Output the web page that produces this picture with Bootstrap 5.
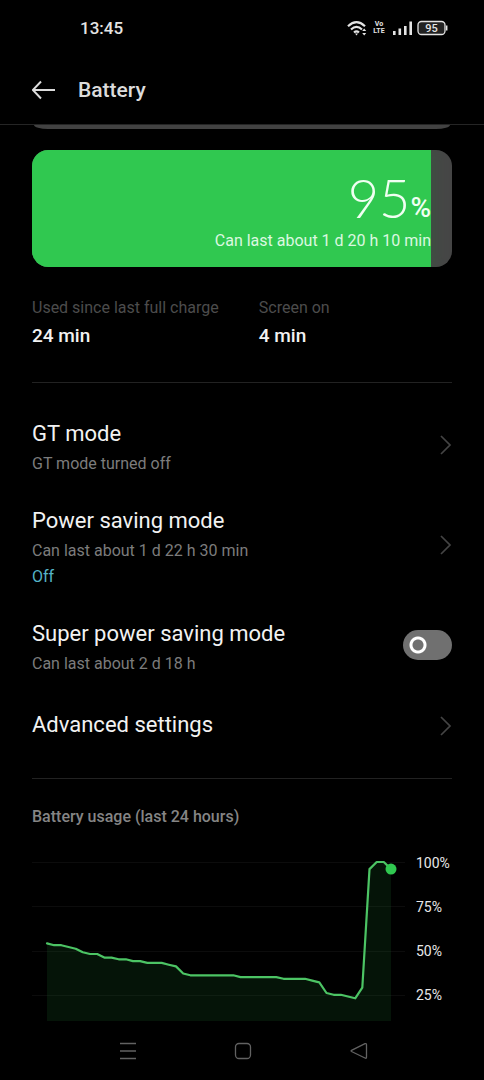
<!DOCTYPE html>
<html lang="en">
<head>
<meta charset="utf-8">
<meta name="viewport" content="width=device-width, initial-scale=1">
<title>Battery</title>
<link href="https://cdn.jsdelivr.net/npm/bootstrap@5.3.0/dist/css/bootstrap.min.css" rel="stylesheet">
<style>
  body { background: #000; color: #f2f2f2; font-family: Roboto, "Noto Sans", sans-serif; font-size: 16px; line-height: 24px; }
  .gutter { padding-left: 32px; padding-right: 32px; }
  .status { height: 56px; padding-left: 80px; padding-right: 36px; color: #e4e4e4; }
  .clock { font-size: 17px; font-weight: 500; }
  .volte { font-size: 7px; line-height: 7px; font-weight: 700; width: 12px; }
  .appbar { height: 69px; gap: 22px; border-bottom: 1px solid #252525; }
  .appbar h1 { font-size: 21px; line-height: 28px; font-weight: 500; color: #dcdcdc; }
  .peek { height: 4px; margin: 0 2px; background: #424242; border-radius: 0 0 14px 14px / 0 0 4px 4px; }
  .gauge { height: 117px; margin-top: 21px; border-radius: 16px; background: #464646; }
  .gauge-fill { background: #30c850; height: 100%; box-shadow: 0 0 14px 1px #3a5640; padding-bottom: 14px; }
  .level { font-family: Lato, sans-serif; font-weight: 300; font-size: 54px; line-height: 48px; margin-bottom: 7px; color: #f0fff2; }
  .unit { font-family: Roboto, sans-serif; font-weight: 500; font-size: 28px; line-height: 28px; }
  .lasting { color: #dcf8e0; }
  .stats { padding-top: 29px; padding-bottom: 31px; }
  .stats dt { font-weight: 400; color: #4c4c4c; }
  .stats dd { font-size: 19px; line-height: 28px; font-weight: 500; margin: 2px 0 1px; }
  .stats > div:first-child { flex: 0 0 54%; }
  .rule { border-top: 1px solid #222; }
  .setting { color: inherit; text-decoration: none; }
  .setting-title { display: block; font-size: 22px; line-height: 30px; font-weight: 400; margin: 0 0 2px; }
  .setting svg, .settings .form-check-input { margin-bottom: 6px; }
  .hint { display: block; color: #7c7c7c; line-height: 26px; }
  .state { color: #55b4c8; line-height: 26px; }
  .settings { padding-top: 36px; padding-bottom: 36px; gap: 29px; }
  .settings .single svg { margin-bottom: 0; }
  .settings .form-switch { min-height: 0; }
  .settings .form-check-input { width: 49px; height: 30px; border: 0; background-color: #707070; box-shadow: none;
    background-image: radial-gradient(circle at 15px 15px, transparent 5px, #fff 6px, #fff 8px, transparent 9px); background-position: 0 0; background-size: 100% 100%; }
  .usage h2 { font-size: 16px; line-height: 24px; font-weight: 500; color: #858585; margin: 26px 0 20px; }
  .chart { flex: 1 1 0; min-width: 0; }
  .scale { flex: none; margin-top: 4px; font-size: 14px; line-height: 20px; width: 36px; color: #e8e8e8; gap: 24px; }
  .navkeys { height: 58px; padding: 0 68px 0 70px; }
  .key { width: 115px; }
</style>
</head>
<body>
<div class="status d-flex align-items-center justify-content-between">
  <time class="clock">13:45</time>
  <div class="d-flex align-items-center">
    <svg width="22" height="20" viewBox="0 0 22 20" fill="none" stroke="currentColor" stroke-width="2.200" aria-label="Wi-Fi"><path d="M1 8.200Q9.500 0 18 8.200M4 11.500Q9.500 6.200 15 11.500M7 14.500Q9.500 12.300 12 14.500"/><path d="M8 15.500h3l-1.500 2zM15.200 13h4l-2-2.500zM15.200 15h4l-2 2.500z" fill="currentColor" stroke="none"/></svg>
    <div class="volte text-center ms-1">Vo<br>LTE</div>
    <svg class="ms-2" width="20" height="16" viewBox="0 0 20 16" fill="currentColor" aria-label="Signal"><path d="M0 11h2.600v4H0zM5.500 8.500h2.600V15H5.500zM11 6h2.600v9H11zM16.400 1.500H19V15h-2.600z"/></svg>
    <svg class="ms-1" width="31" height="16" viewBox="0 0 31 16" fill="none" aria-label="Battery 95"><rect x="1" y="1.500" width="27" height="13" rx="3.500" fill="#222" stroke="currentColor" stroke-width="1.300"/><path d="M29.700 5.500v5" stroke="currentColor" stroke-width="1.500"/><text x="14.500" y="12" text-anchor="middle" font-size="11" font-weight="500" fill="currentColor">95</text></svg>
  </div>
</div>
<header class="appbar gutter d-flex align-items-center">
  <button class="btn p-0 border-0 d-flex" aria-label="Back"><svg width="24" height="20" viewBox="0 0 24 20" fill="none" stroke="#dcdcdc" stroke-width="2"><path d="M23 10H1M9 1.500L.800 10 9 18.500"/></svg></button>
  <h1 class="m-0">Battery</h1>
</header>
<main class="gutter">
  <div class="peek"></div>
  <section class="gauge overflow-hidden">
    <div class="gauge-fill d-flex flex-column justify-content-end align-items-end" style="width:95%">
      <div class="level d-flex align-items-end">95<span class="unit">%</span></div>
      <div class="lasting">Can last about 1 d 20 h 10 min</div>
    </div>
  </section>
  <dl class="stats d-flex m-0">
    <div><dt>Used since last full charge</dt><dd>24 min</dd></div>
    <div><dt>Screen on</dt><dd>4 min</dd></div>
  </dl>
  <section class="settings rule d-flex flex-column">
    <a href="#" class="setting d-flex align-items-center justify-content-between">
      <div><h2 class="setting-title">GT mode</h2><span class="hint">GT mode turned off</span></div>
      <svg width="12" height="20" viewBox="0 0 12 20" fill="none" stroke="#444" stroke-width="1.700"><path d="M1 1l9 9-9 9"/></svg>
    </a>
    <a href="#" class="setting d-flex align-items-center justify-content-between">
      <div><h2 class="setting-title">Power saving mode</h2><span class="hint">Can last about 1 d 22 h 30 min</span><span class="state d-block">Off</span></div>
      <svg width="12" height="20" viewBox="0 0 12 20" fill="none" stroke="#444" stroke-width="1.700"><path d="M1 1l9 9-9 9"/></svg>
    </a>
    <div class="form-switch d-flex align-items-center justify-content-between p-0">
      <label for="super"><span class="setting-title">Super power saving mode</span><span class="hint">Can last about 2 d 18 h</span></label>
      <input class="form-check-input mt-0 mx-0" type="checkbox" role="switch" id="super">
    </div>
    <a href="#" class="setting single d-flex align-items-center justify-content-between mt-1">
      <h2 class="setting-title">Advanced settings</h2>
      <svg width="12" height="20" viewBox="0 0 12 20" fill="none" stroke="#444" stroke-width="1.700"><path d="M1 1l9 9-9 9"/></svg>
    </a>
  </section>
  <section class="usage rule">
    <h2>Battery usage (last 24 hours)</h2>
    <div class="d-flex align-items-start">
      <svg class="chart" viewBox="0 0 384 172" aria-label="Battery level over 24 hours">
        <path d="M0 13.500H373M0 57.500H373M0 102.500H373M0 146.500H373" stroke="#0c0c0c"/>
        <path id="area" fill="#30c850" fill-opacity=".1"/>
        <path id="line" fill="none" stroke="#4cc464" stroke-width="2.200" stroke-linejoin="round" stroke-linecap="round"/>
        <circle id="now" r="5.500" fill="#30c850"/>
      </svg>
      <div class="scale d-flex flex-column"><span>100%</span><span>75%</span><span>50%</span><span>25%</span></div>
    </div>
  </section>
</main>
<nav class="navkeys d-flex justify-content-between align-items-center">
  <button class="key btn p-0 border-0" aria-label="Recent apps"><svg width="18" height="18" viewBox="0 0 18 18" fill="none" stroke="#626262" stroke-width="1.300"><path d="M1 1.500h16M1 9h16M1 16.500h16"/></svg></button>
  <button class="key btn p-0 border-0" aria-label="Home"><svg width="18" height="18" viewBox="0 0 18 18" fill="none" stroke="#626262" stroke-width="1.300"><rect x="1.500" y="1.500" width="15" height="15" rx="3.500"/></svg></button>
  <button class="key btn p-0 border-0" aria-label="Back"><svg width="18" height="18" viewBox="0 0 18 18" fill="none" stroke="#626262" stroke-width="1.300" stroke-linejoin="round"><path d="M1.500 8.300L15 1.700Q16.500 1.200 16.500 2.700V15Q16.500 16.800 15 16L1.500 9.500Q.700 9 1.500 8.300z"/></svg></button>
</nav>
<script src="https://cdn.jsdelivr.net/npm/bootstrap@5.3.0/dist/js/bootstrap.bundle.min.js"></script>
<script>
  // One battery reading per half hour, in percent.
  const levels = [54,53,53,52,51,49,48,48,46,46,45,45,44,44,43,43,43,42,41,37,36,36,36,36,36,36,36,35,35,35,35,35,35,34,34,34,34,33,32,26,25,25,24,23,29,96,100,100,96];
  const points = levels.map((v, i) => [15 + i * 344 / 48, 13 + (100 - v) * 1.77]);
  const line = 'M' + points.map(p => p.map(n => n.toFixed(1)).join(' ')).join('L');
  document.getElementById('line').setAttribute('d', line);
  document.getElementById('area').setAttribute('d', line + 'V172H15Z');
  const now = document.getElementById('now'), last = points[points.length - 1];
  now.setAttribute('cx', last[0]);
  now.setAttribute('cy', last[1]);
</script>
</body>
</html>
